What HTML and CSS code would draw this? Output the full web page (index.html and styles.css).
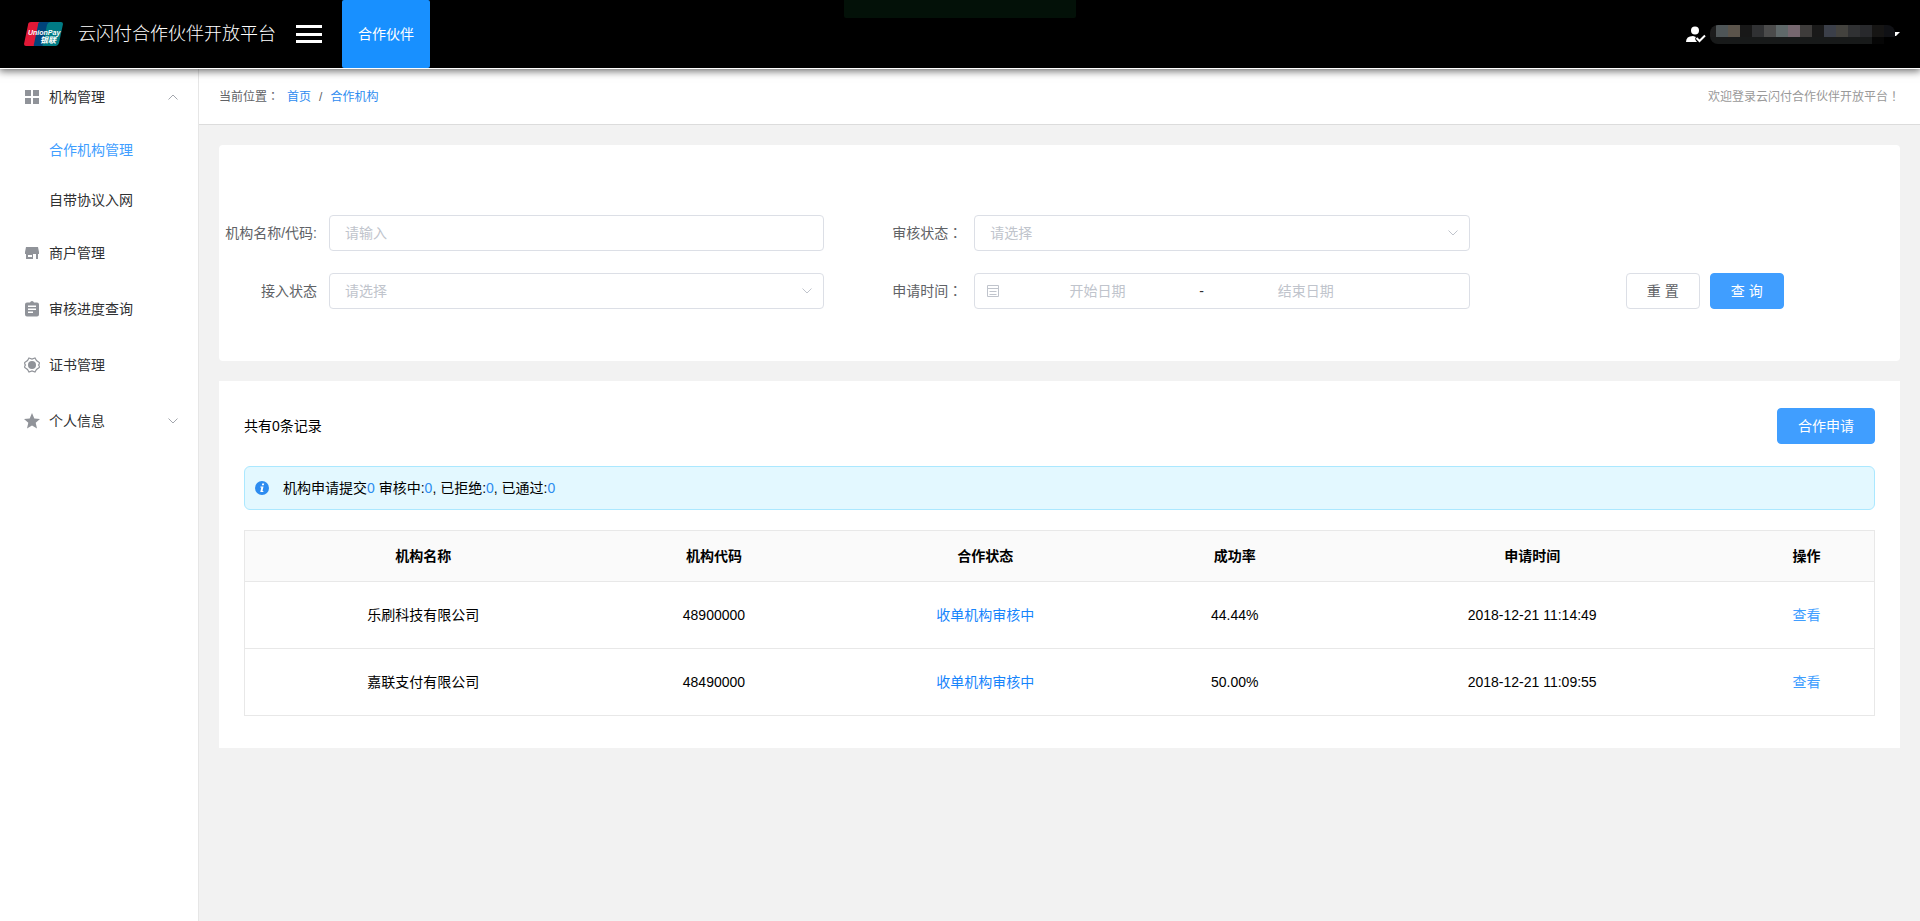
FILE: index.html
```html
<!DOCTYPE html>
<html lang="zh-CN">
<head>
<meta charset="utf-8">
<title>云闪付合作伙伴开放平台</title>
<link rel="stylesheet" href="styles.css">
</head>
<body>
<div class="app">
  <header class="topbar">
    <svg class="logo" viewBox="0 0 39 24" role="img" aria-label="UnionPay 银联">
      <path d="M7 0H18L13 24H2Q0 24 0 22L4 3Q4 0 7 0Z" fill="#e21836"/>
      <path d="M16 0H28L23 24H11Q9 24 10 22L14 3Q14 0 16 0Z" fill="#00447b"/>
      <path d="M27 0H37Q39 0 39 2L35 21Q34 24 32 24H19Q18 24 19 21L23 3Q24 0 27 0Z" fill="#007b84"/>
      <text class="logo-en" x="4" y="13">UnionPay</text>
      <text class="logo-cn" x="16" y="21">银联</text>
    </svg>
    <h1 class="brand">云闪付合作伙伴开放平台</h1>
    <button class="toggle" type="button" aria-label="菜单"><span></span><span></span><span></span></button>
    <a class="tab" href="#">合作伙伴</a>
    <div class="strip"></div>
    <button class="user" type="button" aria-label="用户">
      <svg class="user-icon" viewBox="0 0 20 17">
        <circle cx="9" cy="4.500" r="4" fill="#fff"/>
        <path d="M0 16Q0 10 7 10L10 11Q8 13 11 16Z" fill="#fff"/>
        <path d="M10.500 12L13.500 15L19 9.500" fill="none" stroke="#fff" stroke-width="2"/>
      </svg>
      <span class="mask"><i class="m1"></i><i class="m2"></i><i class="m3"></i><i class="m4"></i><i class="m5"></i><i class="m6"></i><i class="m7"></i><i class="m8"></i><i class="m9"></i><i class="m10"></i><i class="m11"></i><i class="m12"></i><i class="m13"></i><i class="m14"></i><i class="m15"></i><i class="m16"></i></span>
      <svg class="caret" viewBox="0 0 5 4"><path d="M0 0H5L1 4H0Z" fill="#fff"/></svg>
    </button>
  </header>

  <div class="body">
    <nav class="side">
      <a class="item" href="#">
        <svg class="ico" viewBox="0 0 16 16"><path d="M1 1h6v6H1zM9 1h6v6H9zM1 9h6v6H1zM9 9h6v6H9z"/></svg>
        <span>机构管理</span>
        <svg class="arrow" viewBox="0 0 10 6"><path d="M0.500 5.500L5 1L9.500 5.500"/></svg>
      </a>
      <a class="sub active" href="#">合作机构管理</a>
      <a class="sub" href="#">自带协议入网</a>
      <a class="item" href="#">
        <svg class="ico" viewBox="0 0 16 16"><path fill-rule="evenodd" d="M2 2h12l1 5v2h-1v5h-2V9H9v5H2V9H1V7zM4 10v2h4v-2z"/></svg>
        <span>商户管理</span>
      </a>
      <a class="item" href="#">
        <svg class="ico" viewBox="0 0 16 16"><path fill-rule="evenodd" d="M3 1.500h3Q6.500 0 8 0T10 1.500h3q2 0 2 2v10q0 2-2 2H3q-2 0-2-2v-10q0-2 2-2zM4 4.500v1.500h8V4.500zM4 7.500V9h8V7.500zM4 10.500V12h5v-1.500z"/></svg>
        <span>审核进度查询</span>
      </a>
      <a class="item" href="#">
        <svg class="ico" viewBox="0 0 16 16"><path d="M5 1L8 2L11 1L12.500 3.500L15.300 5.500V7L14.500 8L15.300 9V10.500L12.500 12.500L11 15L8 14L5 15L3.500 12.500L0.700 10.500V9L1.500 8L0.700 7V5.500L3.500 3.500Z" fill="none" stroke="#909399" stroke-width="1.200"/><circle cx="8" cy="8" r="4"/></svg>
        <span>证书管理</span>
      </a>
      <a class="item" href="#">
        <svg class="ico" viewBox="0 0 16 16"><path d="M8 0l2.300 5.500 5.700.5-4.300 3.800L13 15.500 8 12.500 3 15.500l1.300-5.700L0 6l5.700-.5z"/></svg>
        <span>个人信息</span>
        <svg class="arrow" viewBox="0 0 10 6"><path d="M0.500 0.500L5 5L9.500 0.500"/></svg>
      </a>
    </nav>

    <main class="main">
      <div class="crumbs">
        <div class="path"><span>当前位置<span class="punct" lang="zh-TW">：</span></span><a href="#">首页</a><span>/</span><a href="#">合作机构</a></div>
        <span class="welcome">欢迎登录云闪付合作伙伴开放平台<span class="punct" lang="zh-TW">！</span></span>
      </div>

      <form class="card search">
        <div class="field f1">
          <label for="org">机构名称/代码:</label>
          <input class="control" id="org" type="text" placeholder="请输入">
        </div>
        <div class="field f2">
          <label for="audit">审核状态<span class="punct" lang="zh-TW">：</span></label>
          <div class="pick">
            <select class="control" id="audit"><option>请选择</option></select>
            <svg class="arrow" viewBox="0 0 10 6"><path d="M0.500 0.500L5 5L9.500 0.500"/></svg>
          </div>
        </div>
        <div class="field f3">
          <label for="access">接入状态</label>
          <div class="pick">
            <select class="control" id="access"><option>请选择</option></select>
            <svg class="arrow" viewBox="0 0 10 6"><path d="M0.500 0.500L5 5L9.500 0.500"/></svg>
          </div>
        </div>
        <div class="field f4">
          <label for="from">申请时间<span class="punct" lang="zh-TW">：</span></label>
          <div class="control range">
            <svg class="cal" viewBox="0 0 14 14"><path d="M1.500 1.500H12.500V12.500H1.500ZM1.500 4.500H12.500M3.500 7.500H10.500M3.500 10.500H10.500"/></svg>
            <input id="from" type="text" placeholder="开始日期">
            <span class="dash">-</span>
            <input id="to" type="text" placeholder="结束日期" aria-label="结束日期">
          </div>
        </div>
        <div class="actions">
          <button class="btn" type="reset">重 置</button>
          <button class="btn primary" type="button">查 询</button>
        </div>
      </form>

      <section class="card results">
        <div class="head">
          <span>共有0条记录</span>
          <button class="btn primary" type="button">合作申请</button>
        </div>
        <div class="notice">
          <svg class="info" viewBox="0 0 14 14"><circle cx="7" cy="7" r="7" fill="#2d8cf0"/><path d="M7.200 2.500h2l-.4 1.700h-2zM5.500 5.500h3L7.500 10h1l-.3 1H5.300L6.300 6.500h-1z" fill="#fff"/></svg>
          <p>机构申请提交<b>0</b> 审核中:<b>0</b>, 已拒绝:<b>0</b>, 已通过:<b>0</b></p>
        </div>
        <table class="grid">
          <colgroup><col class="c1"><col class="c2"><col class="c3"><col class="c4"><col class="c5"><col class="c6"></colgroup>
          <thead>
            <tr><th>机构名称</th><th>机构代码</th><th>合作状态</th><th>成功率</th><th>申请时间</th><th>操作</th></tr>
          </thead>
          <tbody>
            <tr><td>乐刷科技有限公司</td><td>48900000</td><td class="state">收单机构审核中</td><td>44.44%</td><td>2018-12-21 11:14:49</td><td><a href="#">查看</a></td></tr>
            <tr><td>嘉联支付有限公司</td><td>48490000</td><td class="state">收单机构审核中</td><td>50.00%</td><td>2018-12-21 11:09:55</td><td><a href="#">查看</a></td></tr>
          </tbody>
        </table>
      </section>
    </main>
  </div>
</div>
</body>
</html>
```

FILE: styles.css
```css
* { box-sizing: border-box; }

body {
  margin: 0;
  font-family: "Liberation Sans", "Noto Sans CJK SC", sans-serif;
  font-size: 14px;
  line-height: 20px;
  color: #000;
  background: #f2f2f2;
}

a { text-decoration: none; }
button, input, select { font: inherit; }

/* Full-width marks centred in their cell */
.punct { font-family: "Noto Sans CJK TC", sans-serif; line-height: 1; }

.app { display: flex; flex-direction: column; min-height: 100vh; }

/* Top bar */
.topbar {
  position: relative;
  z-index: 2;
  display: flex;
  align-items: center;
  height: 68px;
  padding: 0 20px 0 24px;
  background: #000;
  color: #fff;
  box-shadow: 0 1px 0 #fff, 0 2px 8px 1px rgba(0, 0, 0, 0.6);
}
.logo { width: 39px; height: 24px; }
.logo text { fill: #fff; font-weight: bold; font-style: italic; }
.logo-en { font-size: 7px; }
.logo-cn { font-size: 8px; }
.brand { margin: 0 0 0 15px; font-size: 18px; font-weight: 300; line-height: 24px; }
.toggle {
  display: flex;
  flex-direction: column;
  justify-content: space-between;
  width: 26px;
  height: 18px;
  margin-left: 20px;
  padding: 0;
  border: 0;
  background: none;
}
.toggle span { height: 3px; background: #fff; }
.tab {
  display: flex;
  align-items: center;
  height: 100%;
  margin-left: 20px;
  padding: 0 16px;
  border-radius: 2px;
  background: #1890ff;
  color: #fff;
}
.strip {
  position: absolute;
  top: 0;
  left: 50%;
  width: 232px;
  height: 18px;
  margin-left: -116px;
  border-radius: 0 0 2px 2px;
  background: #031108;
}
.user {
  display: flex;
  align-items: center;
  margin-left: auto;
  padding: 0;
  border: 0;
  background: none;
}
.user-icon { width: 20px; height: 17px; margin-right: 4px; }
.mask { display: flex; width: 185px; height: 19px; overflow: hidden; border-radius: 8px; }
.mask i { flex: 0 0 12px; background: linear-gradient(currentColor 12px, #181a1a 12px); }
.mask i:first-child { flex-basis: 6px; }
.mask .m1 { color: #1c1c1c; }
.mask .m2 { color: #4e5557; }
.mask .m3 { color: #5b544b; }
.mask .m4 { color: #181818; }
.mask .m5 { color: #303133; }
.mask .m6 { color: #4b4b4b; }
.mask .m7 { color: #5f6869; }
.mask .m8 { color: #76676f; }
.mask .m9 { color: #3e3c3b; }
.mask .m10 { color: #191919; }
.mask .m11 { color: #3b3f49; }
.mask .m12 { color: #43423e; }
.mask .m13 { color: #303133; }
.mask .m14 { color: #28292c; }
.mask .m15 { color: #161514; background: linear-gradient(currentColor 12px, #060606 12px); }
.mask .m16 { color: #101115; background: linear-gradient(currentColor 12px, #000 12px); }
.caret { width: 5px; height: 4px; }

/* Side menu */
.body { display: flex; flex: 1; padding-top: 1px; }
.side {
  flex: 0 0 199px;
  border-right: 1px solid #e6e6e6;
  background: #fff;
}
.item, .sub { display: flex; align-items: center; color: #303133; }
.item { height: 56px; padding: 0 20px 0 24px; }
.ico { width: 16px; height: 16px; margin-right: 9px; fill: #909399; }
.arrow { width: 10px; height: 6px; fill: none; stroke: #a3a6ad; }
.item .arrow { margin-left: auto; }
.sub { height: 50px; padding-left: 49px; }
.sub.active { color: #409eff; }

/* Content */
.main { flex: 1; min-width: 0; }
.crumbs {
  display: flex;
  align-items: center;
  justify-content: space-between;
  height: 56px;
  padding: 0 20px;
  border-bottom: 1px solid #dcdcdc;
  background: #fff;
  font-size: 12px;
  color: #606266;
}
.path { display: flex; gap: 8px; }
.path a { color: #2d8cf0; }
.welcome { color: #999; }

.card { margin: 20px 20px 0; background: #fff; }
.search {
  display: grid;
  grid-template-columns: 31fr 31fr 20fr;
  grid-template-areas: "a b ." "c d e";
  gap: 22px 40px;
  padding: 70px 0 52px;
  border-radius: 4px;
}
.f1 { grid-area: a; }
.f2 { grid-area: b; }
.f3 { grid-area: c; }
.f4 { grid-area: d; }
.actions { grid-area: e; display: flex; justify-content: center; gap: 10px; }
.field { display: flex; align-items: center; }
.field label {
  flex: 0 0 110px;
  padding-right: 12px;
  text-align: right;
  color: #606266;
}
.control {
  flex: 1;
  width: 100%;
  min-width: 0;
  height: 36px;
  padding: 0 15px;
  border: 1px solid #dcdfe6;
  border-radius: 4px;
  background: #fff;
  color: #c0c4cc;
}
.control::placeholder, .range input::placeholder { color: #c0c4cc; }
.pick { position: relative; display: flex; flex: 1; }
.pick .control { appearance: none; }
.pick .arrow { position: absolute; top: 15px; right: 12px; stroke: #c0c4cc; pointer-events: none; }
.range { display: flex; align-items: center; padding: 0 10px; }
.cal { width: 14px; height: 14px; margin: 0 5px 0 1px; fill: none; stroke: #c0c4cc; }
.range input {
  width: 39%;
  min-width: 0;
  padding: 0;
  border: 0;
  background: none;
  text-align: center;
}
.dash { width: 5%; text-align: center; color: #303133; }

.btn {
  height: 36px;
  padding: 0 20px;
  border: 1px solid #dcdfe6;
  border-radius: 4px;
  background: #fff;
  color: #606266;
}
.btn.primary { border-color: #409eff; background: #409eff; color: #fff; }

.results { padding: 27px 25px 32px; }
.head { display: flex; align-items: center; justify-content: space-between; }
.notice {
  display: flex;
  align-items: center;
  height: 44px;
  margin: 22px 0 20px;
  padding: 0 10px;
  border: 1px solid #abe8ff;
  border-radius: 6px;
  background: #e3f8ff;
}
.notice p { margin: 0 0 0 14px; }
.notice b { font-weight: normal; color: #2d8cf0; }
.info { width: 14px; height: 14px; }

.grid {
  width: 100%;
  table-layout: fixed;
  border-collapse: collapse;
  border: 1px solid #e8e8e8;
  text-align: center;
}
.grid th { height: 51px; padding: 0; background: #fafafa; font-weight: bold; }
.grid td { height: 67px; padding: 0; border-top: 1px solid #e8e8e8; }
.grid .state { color: #1684fc; }
.grid a { color: #409eff; }
.c1 { width: 21.9%; }
.c2 { width: 13.8%; }
.c3 { width: 19.5%; }
.c4 { width: 11.1%; }
.c5 { width: 25.4%; }
.c6 { width: 8.3%; }
```
